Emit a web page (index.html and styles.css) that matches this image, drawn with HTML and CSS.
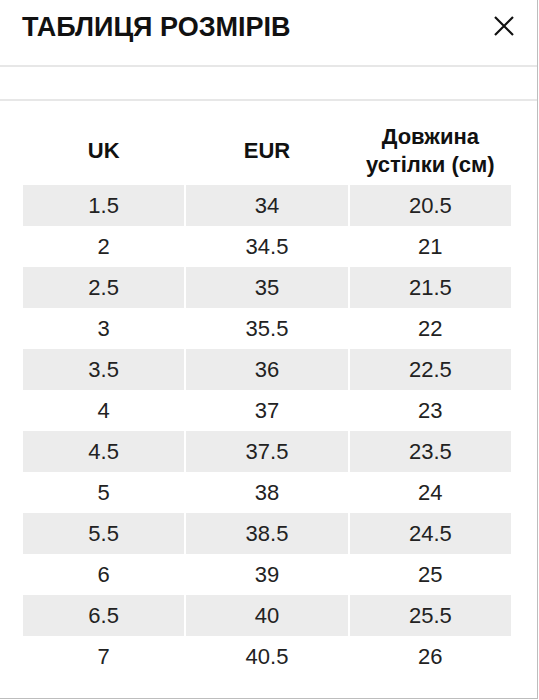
FILE: index.html
```html
<!DOCTYPE html>
<html lang="uk">
<head>
    <meta charset="UTF-8">
    <meta name="viewport" content="width=device-width, initial-scale=1.0">
    <title>Таблиця розмірів</title>
    <link rel="stylesheet" href="styles.css">
</head>
<body>
<div class="panel">
    <div class="head">
        <h1 class="title">ТАБЛИЦЯ РОЗМІРІВ</h1>
        <svg class="close" width="22" height="22" viewBox="0 0 22 22">
            <path d="M2 2 L20 20 M20 2 L2 20" stroke="#111" stroke-width="2.2" fill="none"/>
        </svg>
    </div>
    <div class="tabs"></div>
    <table class="sizes">
        <thead>
        <tr>
            <th>UK</th>
            <th>EUR</th>
            <th>Довжина<br>устілки (см)</th>
        </tr>
        </thead>
        <tbody>
        <tr><td>1.5</td><td>34</td><td>20.5</td></tr>
        <tr><td>2</td><td>34.5</td><td>21</td></tr>
        <tr><td>2.5</td><td>35</td><td>21.5</td></tr>
        <tr><td>3</td><td>35.5</td><td>22</td></tr>
        <tr><td>3.5</td><td>36</td><td>22.5</td></tr>
        <tr><td>4</td><td>37</td><td>23</td></tr>
        <tr><td>4.5</td><td>37.5</td><td>23.5</td></tr>
        <tr><td>5</td><td>38</td><td>24</td></tr>
        <tr><td>5.5</td><td>38.5</td><td>24.5</td></tr>
        <tr><td>6</td><td>39</td><td>25</td></tr>
        <tr><td>6.5</td><td>40</td><td>25.5</td></tr>
        <tr><td>7</td><td>40.5</td><td>26</td></tr>
        </tbody>
    </table>
</div>
</body>
</html>
```

FILE: styles.css
```css
html, body {
  margin: 0;
  padding: 0;
  background: #fff;
}
body {
  font-family: "Liberation Sans", Arial, sans-serif;
  color: #111;
}
.panel {
  width: 538px;
  height: 699px;
  box-sizing: border-box;
  border-right: 1px solid #bdbdbd;
  border-bottom: 1px solid #bdbdbd;
}
.head {
  height: 65px;
  box-sizing: border-box;
  padding: 11px 22px 0;
  display: flex;
  justify-content: space-between;
  align-items: flex-start;
}
.title {
  margin: 0;
  font-size: 27px;
  line-height: 32px;
  font-weight: bold;
}
.close {
  margin-top: 4px;
}
.tabs {
  height: 32px;
  border-top: 2px solid #e7e7e7;
  border-bottom: 2px solid #e7e7e7;
}
.sizes {
  margin: 16px 0 0 21px;
  width: 492px;
  border-collapse: separate;
  border-spacing: 2px 0;
  table-layout: fixed;
}
.sizes th {
  font-size: 22px;
  line-height: 28px;
  font-weight: bold;
  padding: 6px 0;
  text-align: center;
}
.sizes td {
  font-size: 22px;
  height: 41px;
  padding: 0;
  text-align: center;
  color: #222;
}
.sizes tbody tr:nth-child(odd) td {
  background: #ececec;
}
```
